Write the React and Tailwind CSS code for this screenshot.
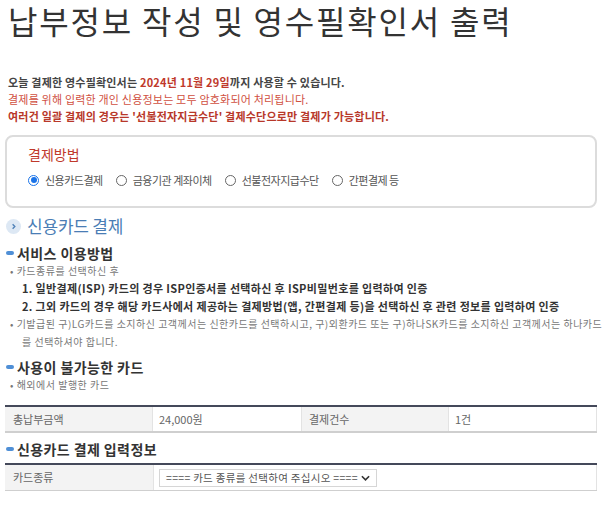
import React from 'react';

const methods = [
  { label: '신용카드결제', checked: true },
  { label: '금융기관 계좌이체' },
  { label: '선불전자지급수단' },
  { label: '간편결제 등' },
];

const Radio = ({ checked }) => (
  <span
    className={`w-[11px] h-[11px] rounded-full border flex items-center justify-center shrink-0 ${
      checked ? 'border-[#1a73e8]' : 'border-[#666]'
    }`}
  >
    {checked && <span className="w-[6px] h-[6px] rounded-full bg-[#1a73e8]" />}
  </span>
);

const SubTitle = ({ children }) => (
  <div className="flex items-center gap-[3px] h-[18px]">
    <span className="w-[8px] h-[4px] rounded-full bg-[#4f8fd6]" />
    <span className="text-[14px] leading-[18px] font-bold text-[#333] tracking-[0.4px]">{children}</span>
  </div>
);

const App = () => {
  return (
    <div className="w-[602px] h-[505px] overflow-hidden bg-white font-['Noto_Sans_CJK_KR',sans-serif] text-[#333]">
      {/* Title */}
      <h1 className="pl-[8px] pt-[1px] text-[32px] leading-[38px] text-[#333] tracking-[1.8px] whitespace-nowrap">
        납부정보 작성 및 영수필확인서 출력
      </h1>

      {/* Notices */}
      <div className="pl-[8px] mt-[35px] text-[11px] leading-[17px] tracking-[0.2px]">
        <p className="font-bold text-[#444]">
          오늘 결제한 영수필확인서는 <span className="text-[#c0392b]">2024년 11월 29일</span>까지 사용할 수 있습니다.
        </p>
        <p className="text-[#d0503f]">결제를 위해 입력한 개인 신용정보는 모두 암호화되어 처리됩니다.</p>
        <p className="font-bold text-[#b8382a]">
          여러건 일괄 결제의 경우는 '선불전자지급수단' 결제수단으로만 결제가 가능합니다.
        </p>
      </div>

      {/* Payment method box */}
      <div className="mx-[5px] mt-[10px] h-[73px] rounded-[8px] border-2 border-[#dcdcdc] px-[21px] pt-[7px]">
        <div className="text-[14px] leading-[20px] text-[#c0392b]">결제방법</div>
        <div className="mt-[8px] flex items-center gap-[13px] text-[11px] text-[#555] tracking-[-0.5px]">
          {methods.map((m) => (
            <label key={m.label} className="flex items-center gap-[6px]">
              <Radio checked={m.checked} />
              <span>{m.label}</span>
            </label>
          ))}
        </div>
      </div>

      {/* Section title */}
      <div className="mt-[6px] pl-[6px] flex items-center gap-[6px] h-[24px]">
        <span className="w-[15px] h-[15px] rounded-full bg-[#dde8f4] flex items-center justify-center">
          <svg width="7" height="7" viewBox="0 0 8 8">
            <path d="M3 1.5 L5.5 4 L3 6.5" fill="none" stroke="#4f81b8" strokeWidth="1.6" />
          </svg>
        </span>
        <span className="text-[17px] text-[#4a7db5] tracking-[-0.2px]">신용카드 결제</span>
      </div>

      <div className="pl-[6px] mt-[6px]">
        <SubTitle>서비스 이용방법</SubTitle>
        <div className="text-[10px] leading-[18px] tracking-[0.5px]">
          <p className="h-[17px] leading-[17px] pl-[4px] text-[#777]">• 카드종류를 선택하신 후</p>
          <p className="h-[18px] pl-[16px] text-[11px] leading-[18px] font-bold text-[#333] tracking-[0.35px]">
            1. 일반결제(ISP) 카드의 경우 ISP인증서를 선택하신 후 ISP비밀번호를 입력하여 인증
          </p>
          <p className="h-[18px] pl-[16px] text-[11px] leading-[18px] font-bold text-[#333] tracking-[0.35px] whitespace-nowrap">
            2. 그외 카드의 경우 해당 카드사에서 제공하는 결제방법(앱, 간편결제 등)을 선택하신 후 관련 정보를 입력하여 인증
          </p>
          <p className="h-[18px] pl-[4px] text-[#777] whitespace-nowrap">
            • 기발급된 구)LG카드를 소지하신 고객께서는 신한카드를 선택하시고, 구)외환카드 또는 구)하나SK카드를 소지하신 고객께서는 하나카드
          </p>
          <p className="h-[18px] pl-[16px] text-[#777]">를 선택하셔야 합니다.</p>
        </div>

        <div className="mt-[7px]">
          <SubTitle>사용이 불가능한 카드</SubTitle>
        </div>
        <p className="h-[18px] pl-[4px] text-[10px] leading-[18px] text-[#777] tracking-[0.5px]">• 해외에서 발행한 카드</p>
      </div>

      {/* Amount table */}
      <div className="mx-[5px] mt-[11px] border-t-2 border-[#44495a] border-b-2 border-b-[#cfcfcf] grid grid-cols-4 h-[28px] text-[11px] text-[#666]">
        <div className="bg-[#f3f3f3] border-r border-[#e3e3e3] flex items-center pl-[8px]">총납부금액</div>
        <div className="flex items-center pl-[6px]">24,000원</div>
        <div className="bg-[#f3f3f3] border-x border-[#e3e3e3] flex items-center pl-[7px]">결제건수</div>
        <div className="flex items-center pl-[6px] border-r border-[#e3e3e3]">1건</div>
      </div>

      <div className="pl-[6px] mt-[7px]">
        <SubTitle>신용카드 결제 입력정보</SubTitle>
      </div>

      <div className="mx-[5px] mt-[5px] border-t-2 border-[#44495a] border-b border-b-[#cfcfcf] flex h-[28px] text-[11px] text-[#666]">
        <div className="w-[149px] bg-[#f3f3f3] border-r border-[#e3e3e3] flex items-center pl-[8px]">카드종류</div>
        <div className="flex-1 flex items-center pl-[5px] border-r border-[#e3e3e3]">
          <div className="w-[218px] h-[18px] border border-[#d6d6d6] flex items-center pl-[6px] gap-[3px] text-[10.5px] text-[#555] tracking-[0.3px] whitespace-nowrap">
            <span>==== 카드 종류를 선택하여 주십시오 ====</span>
            <svg width="9" height="6" viewBox="0 0 10 6">
              <path d="M1 1 L5 5 L9 1" fill="none" stroke="#333" strokeWidth="1.8" />
            </svg>
          </div>
        </div>
      </div>
    </div>
  );
};

export default App;
